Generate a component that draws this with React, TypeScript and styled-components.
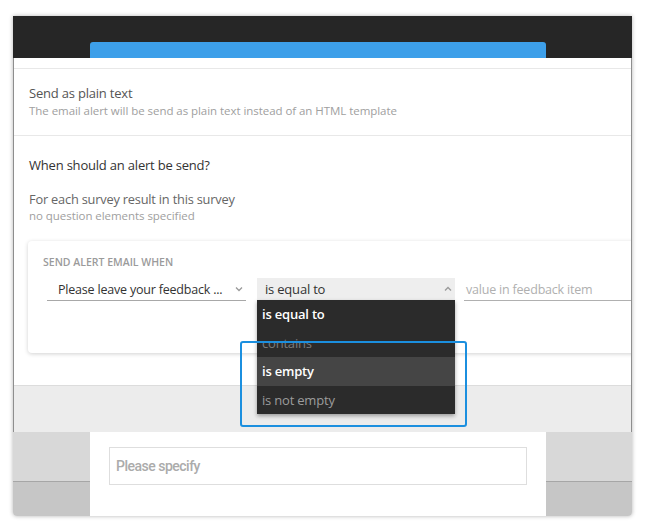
import React from "react";
import styled, { createGlobalStyle } from "styled-components";

const GlobalStyle = createGlobalStyle`
  html, body {
    margin: 0;
    padding: 0;
    background: #ffffff;
  }
  body {
    font-family: "Open Sans", "Noto Sans", sans-serif;
    color: #333;
  }
`;

const Page = styled.div`
  padding: 16px 0 10px 13px;
`;

const Frame = styled.div`
  position: relative;
  width: 619px;
  border-radius: 0 0 4px 4px;
  box-shadow: 0 0 4px rgba(0, 0, 0, 0.3);
  overflow: hidden;
`;

const TopBar = styled.div`
  height: 42px;
  background: #262626;
  display: flex;
  align-items: flex-end;
  padding-left: 77px;
`;

const BlueBar = styled.div`
  width: 456px;
  height: 16px;
  background: #3d9fe9;
  border-radius: 3px 3px 0 0;
`;

const Modal = styled.div`
  background: #fff;
  border-left: 1px solid #8e8e8e;
  border-right: 1px solid #8e8e8e;
  overflow: hidden;
`;

const TopStrip = styled.div`
  height: 10px;
  border-bottom: 1px solid #e8e8e8;
`;

const Section = styled.div<{ $pt: number; $pb: number; $border?: boolean }>`
  padding: ${(p) => p.$pt}px 15px ${(p) => p.$pb}px 15px;
  border-bottom: ${(p) => (p.$border ? "1px solid #e8e8e8" : "none")};
`;

const Title = styled.div<{ $color?: string; $size?: number }>`
  font-size: ${(p) => p.$size ?? 13}px;
  line-height: 18px;
  color: ${(p) => p.$color ?? "#555"};
  letter-spacing: -0.2px;
`;

const Hint = styled.div<{ $gap?: number }>`
  font-size: 11.5px;
  line-height: 16px;
  color: #a0a0a0;
  margin-top: ${(p) => p.$gap ?? 0}px;
  letter-spacing: -0.05px;
`;

const Spacer = styled.div<{ $h: number }>`
  height: ${(p) => p.$h}px;
`;

const Card = styled.div`
  margin: 0 -30px 0 -1px;
  height: 112px;
  box-sizing: border-box;
  padding: 14px 0 0 19px;
  border-radius: 4px;
  background: #fff;
  box-shadow: 0 1px 4px rgba(0, 0, 0, 0.18);
`;

const CardLabel = styled.div`
  font-size: 10.5px;
  line-height: 14px;
  font-weight: 600;
  color: #9b9b9b;
  text-transform: uppercase;
  margin-left: -4px;
`;

const Row = styled.div`
  display: flex;
  align-items: flex-start;
  margin-top: 9px;
`;

const Select = styled.div<{ $open?: boolean; $w: number; $ml: number; $fs: number }>`
  position: relative;
  width: ${(p) => p.$w}px;
  margin-left: ${(p) => p.$ml}px;
  height: 23px;
  box-sizing: border-box;
  display: flex;
  align-items: center;
  justify-content: space-between;
  padding: 0 3px 0 ${(p) => (p.$open ? 8 : 11)}px;
  background: ${(p) => (p.$open ? "#eeeeee" : "transparent")};
  border-bottom: 1px solid ${(p) => (p.$open ? "#eeeeee" : "#a8a8a8")};
  font-size: ${(p) => p.$fs}px;
  color: #333;
  letter-spacing: -0.2px;
`;

const ValueInput = styled.div`
  flex: 1;
  margin-left: 9px;
  height: 23px;
  box-sizing: border-box;
  border-bottom: 1px solid #b0b0b0;
  display: flex;
  align-items: center;
  padding-left: 2px;
  font-size: 12.5px;
  color: #b0b0b0;
  letter-spacing: -0.2px;
`;

const Menu = styled.div`
  position: absolute;
  top: 100%;
  left: 0;
  width: 100%;
  background: #2b2b2b;
  box-shadow: 0 2px 4px rgba(0, 0, 0, 0.35);
  z-index: 2;
`;

const MenuItem = styled.div<{ $active?: boolean; $strong?: boolean; $dim?: boolean }>`
  height: 28.5px;
  display: flex;
  align-items: center;
  padding-left: 5px;
  font-size: 13px;
  letter-spacing: -0.2px;
  background: ${(p) => (p.$active ? "#454545" : "transparent")};
  color: ${(p) => (p.$strong ? "#ffffff" : p.$dim ? "#7c7c7c" : "#9c9c9c")};
  font-weight: ${(p) => (p.$strong ? 600 : 400)};
`;

const Footer = styled.div`
  height: 46px;
  background: #ececec;
  border-top: 1px solid #dcdcdc;
`;

const Lower = styled.div`
  height: 84px;
  padding-left: 77px;
  background: linear-gradient(
    #d8d8d8 0,
    #d8d8d8 49px,
    #a6a6a6 49px,
    #a6a6a6 50px,
    #c6c6c6 50px
  );
`;

const WhitePane = styled.div`
  width: 456px;
  height: 100%;
  box-sizing: border-box;
  background: #fff;
  padding: 15px 19px 0 19px;
`;

const SpecifyBox = styled.div`
  height: 38px;
  box-sizing: border-box;
  border: 1px solid #dedede;
  display: flex;
  align-items: center;
  padding-left: 6px;
  font-family: Roboto, "Liberation Sans", sans-serif;
  font-weight: 500;
  font-size: 14px;
  letter-spacing: -0.5px;
  color: #ababab;
`;

const Highlight = styled.div`
  position: absolute;
  left: 227px;
  top: 325px;
  width: 227px;
  height: 86px;
  box-sizing: border-box;
  border: 2px solid #1b8fdf;
  border-radius: 3px;
  pointer-events: none;
  z-index: 3;
`;

const Chevron = ({ up }: { up?: boolean }) => (
  <svg width="8" height="6" viewBox="0 0 8 6">
    <path
      d={up ? "M1 4.5 L4 1.5 L7 4.5" : "M1 1.5 L4 4.5 L7 1.5"}
      fill="none"
      stroke="#9a9a9a"
      strokeWidth="1.3"
    />
  </svg>
);

const options = [
  { label: "is equal to", strong: true },
  { label: "contains", dim: true },
  { label: "is empty", strong: true, active: true },
  { label: "is not empty" },
];

export default function App() {
  return (
    <>
      <GlobalStyle />
      <Page>
        <Frame>
          <TopBar>
            <BlueBar />
          </TopBar>
          <Modal>
            <TopStrip />
            <Section $pt={15} $pb={16} $border>
              <Title>Send as plain text</Title>
              <Hint $gap={1}>
                The email alert will be send as plain text instead of an HTML template
              </Hint>
            </Section>
            <Section $pt={20} $pb={32}>
              <Title $color="#333">When should an alert be send?</Title>
              <Spacer $h={16} />
              <Title $color="#666" $size={12.8}>
                For each survey result in this survey
              </Title>
              <Hint>no question elements specified</Hint>
              <Spacer $h={17} />
              <Card>
                <CardLabel>Send alert email when</CardLabel>
                <Row>
                  <Select $w={199} $ml={0} $fs={12.5}>
                    <span>Please leave your feedback ...</span>
                    <Chevron />
                  </Select>
                  <Select $w={198} $ml={11} $fs={13} $open>
                    <span>is equal to</span>
                    <Chevron up />
                    <Menu>
                      {options.map((o) => (
                        <MenuItem
                          key={o.label}
                          $strong={o.strong}
                          $active={o.active}
                          $dim={o.dim}
                        >
                          {o.label}
                        </MenuItem>
                      ))}
                    </Menu>
                  </Select>
                  <ValueInput>value in feedback item</ValueInput>
                </Row>
              </Card>
            </Section>
            <Footer />
          </Modal>
          <Lower>
            <WhitePane>
              <SpecifyBox>Please specify</SpecifyBox>
            </WhitePane>
          </Lower>
          <Highlight />
        </Frame>
      </Page>
    </>
  );
}
